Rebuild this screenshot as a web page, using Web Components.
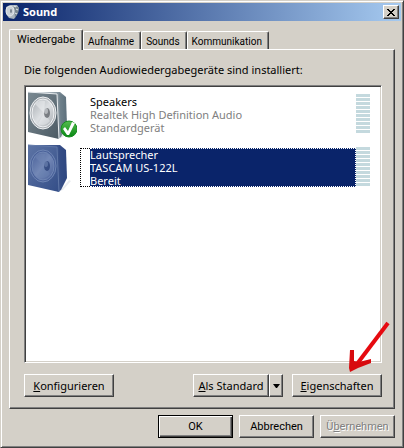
<!DOCTYPE html>
<html lang="de">
<head>
<meta charset="utf-8">
<title>Sound</title>
<style>
    body {
        margin: 0;
        font: 11px/13px "Noto Sans", "Open Sans", sans-serif;
        color: #000;
        background: #d4d0c8;
    }
</style>
</head>
<body>
<sound-dialog></sound-dialog>

<script>
class SpeakerIcon extends HTMLElement {
    constructor() {
        super();
        this.attachShadow({ mode: 'open' });
        const blue = this.hasAttribute('selected');
        const c = blue
            ? { f1: '#5d74a5', f2: '#344e88', side: '#5b72a6', side2: '#2f4780', rim: '#6f86b4', cone: '#7388b6', dark: '#4a619a', hub: '#243b72', edge: '#6078a8' }
            : { f1: '#7b8a93', f2: '#4c5a63', side: '#e3e8ec', side2: '#5d707c', rim: '#f0f2f4', cone: '#dcdfe2', dark: '#a8adb2', hub: '#54595e', edge: '#e8ecef' };
        this.shadowRoot.innerHTML = `
            <style>
                :host { display: block; flex: none; }
                svg { display: block; }
            </style>
            <svg width="50" height="50" viewBox="0 0 50 50" aria-hidden="true">
                <defs>
                    <linearGradient id="face" x2="1" y2="1"><stop stop-color="${c.f1}"/><stop offset="1" stop-color="${c.f2}"/></linearGradient>
                    <linearGradient id="side"><stop stop-color="${c.side}"/><stop offset="1" stop-color="${c.side2}"/></linearGradient>
                    <linearGradient id="cone" x2="1" y2="1"><stop stop-color="${c.dark}"/><stop offset=".5" stop-color="${c.cone}"/><stop offset="1" stop-color="${c.dark}"/></linearGradient>
                    <linearGradient id="tick" x2="0" y2="1"><stop stop-color="#55bd4e"/><stop offset="1" stop-color="#078713"/></linearGradient>
                </defs>
                <path d="M33 47L42 36L44 37L36 46Z" fill="#e9ecf0"/>
                <path d="M8 1L33 1L39 6L40 34L34 46L31 48Z" fill="url(#side)"/>
                <path d="M32 2L39 7L39 33L34 42Z" fill="${c.side2}" opacity=".35"/>
                <path d="M1 1L30 3L32 48L1 41Z" fill="url(#face)"/>
                <path d="M1 1L30 3L32 48" fill="none" stroke="${c.edge}" stroke-width="1"/>
                <ellipse cx="16" cy="22" rx="13" ry="16" fill="${c.dark}" stroke="${c.rim}" stroke-width="1"/>
                <ellipse cx="16" cy="22" rx="11" ry="14" fill="url(#cone)" stroke="${c.rim}" stroke-width="1"/>
                <path d="M17 22L8 13Q12 8 18 10Z" fill="${c.rim}" opacity=".5"/>
                <path d="M17 22L11 33Q18 36 23 30Z" fill="${c.rim}" opacity=".4"/>
                <ellipse cx="20" cy="22" rx="3" ry="5" fill="${c.hub}" opacity=".7"/>
                <ellipse cx="19" cy="20" rx="2" ry="3" fill="${c.cone}" opacity=".6"/>
                ${this.hasAttribute('default') ? `
                <circle cx="42" cy="38" r="8" fill="url(#tick)" stroke="#178d20" stroke-width="1"/>
                <path d="M36 38L38 36L41 40L45 31L48 32L42 44L40 44Z" fill="#fff"/>` : ''}
            </svg>
        `;
    }
}
customElements.define('speaker-icon', SpeakerIcon);

class LevelMeter extends HTMLElement {
    constructor() {
        super();
        this.attachShadow({ mode: 'open' });
        this.shadowRoot.innerHTML = `
            <style>
                :host {
                    display: block;
                    flex: none;
                    width: 14px;
                    height: 39px;
                    background: repeating-linear-gradient(#c4d9de 0 3px, #fff 3px 4px);
                }
            </style>
        `;
    }
}
customElements.define('level-meter', LevelMeter);

class SoundDevice extends HTMLElement {
    constructor() {
        super();
        this.attachShadow({ mode: 'open' });
        const selected = this.hasAttribute('selected');
        this.setAttribute('role', 'option');
        this.setAttribute('aria-selected', selected);
        this.shadowRoot.innerHTML = `
            <style>
                :host { display: flex; height: 53px; color: #808080; }
                speaker-icon { margin-right: 3px; }
                .focus {
                    flex: 1;
                    box-sizing: border-box;
                    height: 39px;
                    margin-top: 4px;
                    padding-left: 9px;
                    border: 1px dotted transparent;
                    border-right: 0;
                }
                .text {
                    box-sizing: border-box;
                    height: 39px;
                    margin-top: -1px;
                    border: 1px dotted transparent;
                    border-left: 0;
                }
                ::slotted(span) { display: block; }
                .name { margin-top: -1px; color: #000; }
                level-meter { margin-top: 3px; }
                :host([selected]) .focus { border-color: #000; }
                :host([selected]) .text { background: #0a246a; border-color: #fff; }
                :host([selected]) .text, :host([selected]) .name { color: #fff; }
            </style>
            <speaker-icon ${selected ? 'selected' : ''} ${this.hasAttribute('default') ? 'default' : ''}></speaker-icon>
            <div class="focus">
                <div class="text">
                    <div class="name"><slot name="name"></slot></div>
                    <div><slot name="driver"></slot></div>
                    <div><slot name="state"></slot></div>
                </div>
            </div>
            <level-meter></level-meter>
        `;
    }
}
customElements.define('sound-device', SoundDevice);

class ClassicButton extends HTMLElement {
    constructor() {
        super();
        this.attachShadow({ mode: 'open' });
        this.shadowRoot.innerHTML = `
            <style>
                :host { display: flex; width: 90px; }
                :host([dialog]) { width: 75px; font-family: Roboto, sans-serif; }
                button {
                    flex: 1;
                    height: 23px;
                    padding: 0;
                    font: inherit;
                    color: inherit;
                    white-space: nowrap;
                    background: #d4d0c8;
                    border: 1px solid;
                    border-color: #fff #404040 #404040 #fff;
                    box-shadow: inset -1px -1px #808080;
                }
                :host([primary]) button {
                    border-color: #000;
                    box-shadow: inset 1px 1px #fff, inset -1px -1px #404040, inset -2px -2px #808080;
                }
                button:disabled { color: #808080; text-shadow: 1px 1px #fff; }
                .drop { flex: none; width: 14px; }
                svg { display: block; margin: auto; }
            </style>
            <button type="button" ${this.hasAttribute('disabled') ? 'disabled' : ''}><slot></slot></button>
            ${this.hasAttribute('split') ? `
            <button type="button" class="drop" aria-label="Weitere Optionen">
                <svg width="7" height="4" viewBox="0 0 7 4"><path d="M0 0H7L4 4H3Z"/></svg>
            </button>` : ''}
        `;
    }
}
customElements.define('classic-button', ClassicButton);

class TabItem extends HTMLElement {
    constructor() {
        super();
        this.attachShadow({ mode: 'open' });
        this.shadowRoot.innerHTML = `
            <style>
                :host { display: block; font-family: Roboto, sans-serif; font-size: 10px; }
                button {
                    display: block;
                    height: 18px;
                    padding: 1px 6px 0 4px;
                    font: inherit;
                    color: inherit;
                    background: #d4d0c8;
                    border: 1px solid;
                    border-color: #fff #404040 transparent #fff;
                    border-bottom: 0;
                    border-radius: 2px 2px 0 0;
                    box-shadow: inset -1px 0 #808080;
                }
                :host([selected]) { margin: 0 0 -1px; position: relative; font-size: 11px; }
                :host([selected]) button { height: 21px; padding: 0 7px 2px; }
            </style>
            <button type="button" role="tab" aria-selected="${this.hasAttribute('selected')}"><slot></slot></button>
        `;
    }
}
customElements.define('tab-item', TabItem);

class TitleBar extends HTMLElement {
    constructor() {
        super();
        this.attachShadow({ mode: 'open' });
        this.shadowRoot.innerHTML = `
            <style>
                :host {
                    display: flex;
                    align-items: center;
                    height: 18px;
                    padding: 0 2px;
                    color: #fff;
                    background: linear-gradient(90deg, #0a246a, #a6caf0);
                }
                h1 { flex: 1; margin: 0 0 0 3px; font: bold 11px/18px "Noto Sans", "Open Sans", sans-serif; }
                svg { display: block; }
                button {
                    width: 16px;
                    height: 14px;
                    padding: 0;
                    background: #d4d0c8;
                    border: 1px solid;
                    border-color: #fff #404040 #404040 #fff;
                    box-shadow: inset -1px -1px #808080;
                }
                button svg { margin: 0 auto; }
            </style>
            <svg width="15" height="16" viewBox="0 0 15 16" aria-hidden="true">
                <path d="M1 3L6 1L12 1L14 4L13 9L9 15L4 14L1 10Z" fill="#aab5bd"/>
                <path d="M9 3L14 3L13 9L10 14Z" fill="#78868f"/>
                <ellipse cx="5" cy="7" rx="4" ry="5" fill="#c9d0d6" stroke="#e6eaed"/>
                <ellipse cx="6" cy="7" rx="1" ry="2" fill="#78828c"/>
                <path d="M11 5L13 6M10 9L12 10M9 2L11 3" stroke="#e6eaee"/>
            </svg>
            <h1><slot></slot></h1>
            <button type="button" aria-label="Schließen">
                <svg width="8" height="7" viewBox="0 0 8 7" shape-rendering="crispEdges"><path d="M0 0H2V1H3V2H5V1H6V0H8V1H7V2H6V3H5V4H6V5H7V6H8V7H6V6H5V5H3V6H2V7H0V6H1V5H2V4H3V3H2V2H1V1H0Z"/></svg>
            </button>
        `;
    }
}
customElements.define('title-bar', TitleBar);

class RedArrow extends HTMLElement {
    constructor() {
        super();
        this.attachShadow({ mode: 'open' });
        this.shadowRoot.innerHTML = `
            <style>
                :host { display: block; position: absolute; right: -9px; bottom: 24px; pointer-events: none; }
                svg { display: block; }
            </style>
            <svg width="42" height="52" viewBox="0 0 42 52" aria-hidden="true">
                <path d="M39 2L8 43" fill="none" stroke="#e60a10" stroke-width="4"/>
                <path d="M1 29H5V40L10 41L22 38V42L9 47L1 51L0 47Z" fill="#d80a0e"/>
            </svg>
        `;
    }
}
customElements.define('red-arrow', RedArrow);

class SoundDialog extends HTMLElement {
    constructor() {
        super();
        this.attachShadow({ mode: 'open' });
        this.shadowRoot.innerHTML = `
            <style>
                :host {
                    display: flex;
                    flex-direction: column;
                    box-sizing: border-box;
                    min-height: 100vh;
                    padding: 1px;
                    border: 1px solid;
                    border-color: #d4d0c8 #404040 #404040 #d4d0c8;
                    box-shadow: inset 1px 1px #fff, inset -1px -1px #808080;
                }
                title-bar { margin: 1px 1px 0; }
                main { flex: 1; display: flex; flex-direction: column; padding: 8px 7px 0; }
                .tabs { display: flex; align-items: flex-end; }
                .pane {
                    flex: 1;
                    display: flex;
                    flex-direction: column;
                    padding: 13px 12px 11px 14px;
                    border: 1px solid;
                    border-color: #fff #404040 #404040 #fff;
                    box-shadow: inset -1px -1px #808080;
                }
                p { margin: 0; }
                .list {
                    flex: 1;
                    margin: 9px 0 11px;
                    padding: 5px 11px 5px 2px;
                    background: #fff;
                    border: 1px solid;
                    border-color: #808080 #fff #fff #808080;
                    box-shadow: inset 1px 1px #404040, inset -1px -1px #d4d0c8;
                }
                .actions { display: flex; gap: 9px; position: relative; }
                .actions :first-child { margin-right: auto; }
                footer { display: flex; justify-content: flex-end; gap: 6px; padding: 6px 0 8px; }
            </style>
            <title-bar>Sound</title-bar>
            <main>
                <div class="tabs" role="tablist">
                    <tab-item selected>Wiedergabe</tab-item>
                    <tab-item>Aufnahme</tab-item>
                    <tab-item>Sounds</tab-item>
                    <tab-item>Kommunikation</tab-item>
                </div>
                <section class="pane" role="tabpanel">
                    <p id="label">Die folgenden Audiowiedergabegeräte sind installiert:</p>
                    <div class="list" role="listbox" aria-labelledby="label">
                        <sound-device default>
                            <span slot="name">Speakers</span>
                            <span slot="driver">Realtek High Definition Audio</span>
                            <span slot="state">Standardgerät</span>
                        </sound-device>
                        <sound-device selected>
                            <span slot="name">Lautsprecher</span>
                            <span slot="driver">TASCAM US-122L</span>
                            <span slot="state">Bereit</span>
                        </sound-device>
                    </div>
                    <div class="actions">
                        <classic-button><u>K</u>onfigurieren</classic-button>
                        <classic-button split><u>A</u>ls Standard</classic-button>
                        <classic-button><u>E</u>igenschaften</classic-button>
                        <red-arrow></red-arrow>
                    </div>
                </section>
                <footer>
                    <classic-button dialog primary>OK</classic-button>
                    <classic-button dialog>Abbrechen</classic-button>
                    <classic-button dialog disabled>Ü<u>b</u>ernehmen</classic-button>
                </footer>
            </main>
        `;
    }
}
customElements.define('sound-dialog', SoundDialog);
</script>
</body>
</html>
